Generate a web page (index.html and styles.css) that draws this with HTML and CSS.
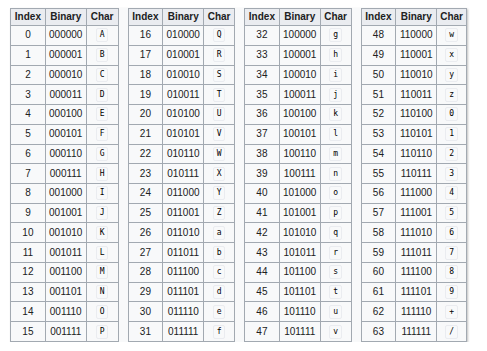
FILE: index.html
```html
<!DOCTYPE html>
<html>
<head>
<meta charset="utf-8">
<link rel="stylesheet" href="styles.css">
</head>
<body>
<div class="wrap">
<table class="b64">
<colgroup><col class="c-i"><col class="c-b"><col class="c-c"></colgroup>
<tr><th>Index</th><th>Binary</th><th>Char</th></tr>
<tr><td>0</td><td>000000</td><td><code>A</code></td></tr>
<tr><td>1</td><td>000001</td><td><code>B</code></td></tr>
<tr><td>2</td><td>000010</td><td><code>C</code></td></tr>
<tr><td>3</td><td>000011</td><td><code>D</code></td></tr>
<tr><td>4</td><td>000100</td><td><code>E</code></td></tr>
<tr><td>5</td><td>000101</td><td><code>F</code></td></tr>
<tr><td>6</td><td>000110</td><td><code>G</code></td></tr>
<tr><td>7</td><td>000111</td><td><code>H</code></td></tr>
<tr><td>8</td><td>001000</td><td><code>I</code></td></tr>
<tr><td>9</td><td>001001</td><td><code>J</code></td></tr>
<tr><td>10</td><td>001010</td><td><code>K</code></td></tr>
<tr><td>11</td><td>001011</td><td><code>L</code></td></tr>
<tr><td>12</td><td>001100</td><td><code>M</code></td></tr>
<tr><td>13</td><td>001101</td><td><code>N</code></td></tr>
<tr><td>14</td><td>001110</td><td><code>O</code></td></tr>
<tr><td>15</td><td>001111</td><td><code>P</code></td></tr>
</table>
<table class="b64">
<colgroup><col class="c-i"><col class="c-b"><col class="c-c2"></colgroup>
<tr><th>Index</th><th>Binary</th><th>Char</th></tr>
<tr><td>16</td><td>010000</td><td><code>Q</code></td></tr>
<tr><td>17</td><td>010001</td><td><code>R</code></td></tr>
<tr><td>18</td><td>010010</td><td><code>S</code></td></tr>
<tr><td>19</td><td>010011</td><td><code>T</code></td></tr>
<tr><td>20</td><td>010100</td><td><code>U</code></td></tr>
<tr><td>21</td><td>010101</td><td><code>V</code></td></tr>
<tr><td>22</td><td>010110</td><td><code>W</code></td></tr>
<tr><td>23</td><td>010111</td><td><code>X</code></td></tr>
<tr><td>24</td><td>011000</td><td><code>Y</code></td></tr>
<tr><td>25</td><td>011001</td><td><code>Z</code></td></tr>
<tr><td>26</td><td>011010</td><td><code>a</code></td></tr>
<tr><td>27</td><td>011011</td><td><code>b</code></td></tr>
<tr><td>28</td><td>011100</td><td><code>c</code></td></tr>
<tr><td>29</td><td>011101</td><td><code>d</code></td></tr>
<tr><td>30</td><td>011110</td><td><code>e</code></td></tr>
<tr><td>31</td><td>011111</td><td><code>f</code></td></tr>
</table>
<table class="b64">
<colgroup><col class="c-i"><col class="c-b"><col class="c-c2"></colgroup>
<tr><th>Index</th><th>Binary</th><th>Char</th></tr>
<tr><td>32</td><td>100000</td><td><code>g</code></td></tr>
<tr><td>33</td><td>100001</td><td><code>h</code></td></tr>
<tr><td>34</td><td>100010</td><td><code>i</code></td></tr>
<tr><td>35</td><td>100011</td><td><code>j</code></td></tr>
<tr><td>36</td><td>100100</td><td><code>k</code></td></tr>
<tr><td>37</td><td>100101</td><td><code>l</code></td></tr>
<tr><td>38</td><td>100110</td><td><code>m</code></td></tr>
<tr><td>39</td><td>100111</td><td><code>n</code></td></tr>
<tr><td>40</td><td>101000</td><td><code>o</code></td></tr>
<tr><td>41</td><td>101001</td><td><code>p</code></td></tr>
<tr><td>42</td><td>101010</td><td><code>q</code></td></tr>
<tr><td>43</td><td>101011</td><td><code>r</code></td></tr>
<tr><td>44</td><td>101100</td><td><code>s</code></td></tr>
<tr><td>45</td><td>101101</td><td><code>t</code></td></tr>
<tr><td>46</td><td>101110</td><td><code>u</code></td></tr>
<tr><td>47</td><td>101111</td><td><code>v</code></td></tr>
</table>
<table class="b64">
<colgroup><col class="c-i"><col class="c-b"><col class="c-c3"></colgroup>
<tr><th>Index</th><th>Binary</th><th>Char</th></tr>
<tr><td>48</td><td>110000</td><td><code>w</code></td></tr>
<tr><td>49</td><td>110001</td><td><code>x</code></td></tr>
<tr><td>50</td><td>110010</td><td><code>y</code></td></tr>
<tr><td>51</td><td>110011</td><td><code>z</code></td></tr>
<tr><td>52</td><td>110100</td><td><code>0</code></td></tr>
<tr><td>53</td><td>110101</td><td><code>1</code></td></tr>
<tr><td>54</td><td>110110</td><td><code>2</code></td></tr>
<tr><td>55</td><td>110111</td><td><code>3</code></td></tr>
<tr><td>56</td><td>111000</td><td><code>4</code></td></tr>
<tr><td>57</td><td>111001</td><td><code>5</code></td></tr>
<tr><td>58</td><td>111010</td><td><code>6</code></td></tr>
<tr><td>59</td><td>111011</td><td><code>7</code></td></tr>
<tr><td>60</td><td>111100</td><td><code>8</code></td></tr>
<tr><td>61</td><td>111101</td><td><code>9</code></td></tr>
<tr><td>62</td><td>111110</td><td><code>+</code></td></tr>
<tr><td>63</td><td>111111</td><td><code>/</code></td></tr>
</table>
</div>
</body>
</html>
```
FILE: styles.css
```css
html, body {
  margin: 0;
  padding: 0;
  background: #ffffff;
}
body {
  padding: 8px 0 0 10px;
  font-family: "Liberation Sans", Arial, sans-serif;
  font-size: 10px;
  color: #202122;
}
.wrap {
  display: flex;
  gap: 9px;
  width: 457px;
  height: 334px;
  background: #f8f9fa;
  box-shadow: 1px 1px 2px rgba(0, 0, 0, 0.25);
}
.b64 {
  border-collapse: collapse;
  table-layout: fixed;
  background: #f8f9fa;
  border: 1px solid #a2a9b1;
  height: 334px;
}
.c-i { width: 35px; }
.c-b { width: 41px; }
.c-c { width: 32px; }
.c-c2 { width: 31px; }
.c-c3 { width: 30px; }
.b64 th,
.b64 td {
  border: 1px solid #a2a9b1;
  padding: 0;
  text-align: center;
  vertical-align: middle;
  line-height: 12px;
}
.b64 th {
  background: #eaecf0;
  font-weight: bold;
  font-size: 10px;
}
.b64 code {
  display: inline-block;
  font-family: "DejaVu Sans Mono", "Liberation Mono", monospace;
  font-size: 8px;
  line-height: 10px;
  padding: 1px 3px;
  background: #f8f9fa;
  border: 1px solid #eaecf0;
  border-radius: 2px;
  color: #000000;
}
```
